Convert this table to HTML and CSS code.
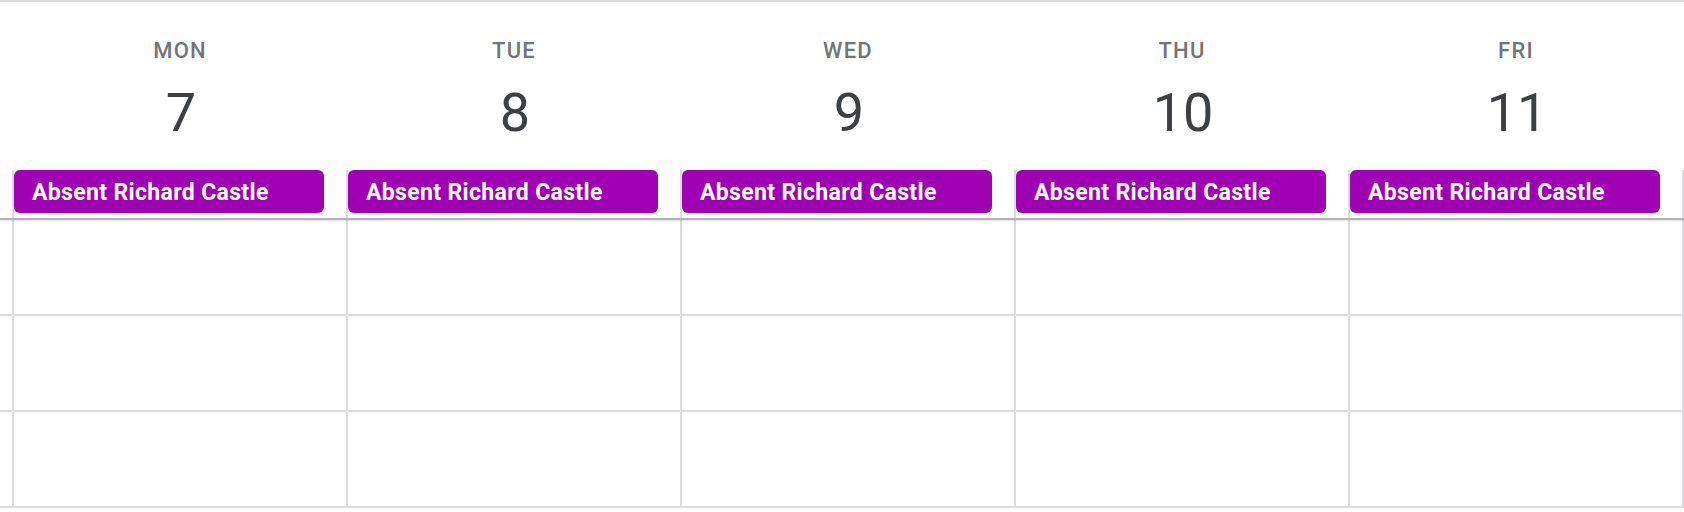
FILE: index.html
```html
<!DOCTYPE html>
<html lang="en">
<head>
<meta charset="utf-8">
<title>Week view</title>
<link rel="stylesheet" href="styles.css">
</head>
<body>
<div class="calendar">
  <div class="head">
    <div class="gutter"></div>
    <div class="day"><div class="dname">MON</div><div class="dnum">7</div></div>
    <div class="day"><div class="dname">TUE</div><div class="dnum">8</div></div>
    <div class="day"><div class="dname">WED</div><div class="dnum">9</div></div>
    <div class="day"><div class="dname">THU</div><div class="dnum">10</div></div>
    <div class="day"><div class="dname">FRI</div><div class="dnum">11</div></div>
  </div>
  <div class="allday">
    <div class="gutter"></div>
    <div class="cell"><div class="chip">Absent Richard Castle</div></div>
    <div class="cell"><div class="chip">Absent Richard Castle</div></div>
    <div class="cell"><div class="chip">Absent Richard Castle</div></div>
    <div class="cell"><div class="chip">Absent Richard Castle</div></div>
    <div class="cell last"><div class="chip">Absent Richard Castle</div></div>
  </div>
  <div class="grid">
    <div class="row">
      <div class="gutter"></div>
      <div class="cell"></div><div class="cell"></div><div class="cell"></div><div class="cell"></div><div class="cell last"></div>
    </div>
    <div class="row">
      <div class="gutter"></div>
      <div class="cell"></div><div class="cell"></div><div class="cell"></div><div class="cell"></div><div class="cell last"></div>
    </div>
    <div class="row">
      <div class="gutter"></div>
      <div class="cell"></div><div class="cell"></div><div class="cell"></div><div class="cell"></div><div class="cell last"></div>
    </div>
  </div>
</div>
</body>
</html>
```

FILE: styles.css
```css
html, body {
  margin: 0;
  padding: 0;
  background: #ffffff;
  overflow: hidden;
}

.calendar {
  width: 1684px;
  height: 512px;
  border-top: 2px solid #dcdce0;
  box-sizing: border-box;
  font-family: Roboto, "Liberation Sans", sans-serif;
}

.gutter {
  width: 12px;
  flex: none;
}

.head {
  display: flex;
  padding-top: 36px;
  height: 132px;
  box-sizing: border-box;
}

.day {
  width: 334px;
  flex: none;
  display: flex;
  flex-direction: column;
  align-items: center;
}

.dname {
  font-size: 22px;
  line-height: 26px;
  font-weight: 500;
  letter-spacing: 1.2px;
  color: #70757a;
  padding-left: 2px;
}

.dnum {
  margin-top: 17px;
  font-size: 54px;
  line-height: 64px;
  font-weight: 400;
  color: #3c4043;
  padding-left: 4px;
}

.allday {
  display: flex;
  margin-top: 36px;
  height: 48px;
  border-bottom: 2px solid #b2b2b6;
  box-shadow: 0 1px 2px rgba(0, 0, 0, 0.12);
  position: relative;
}

.cell {
  width: 332px;
  flex: none;
  border-left: 2px solid #dcdce0;
}

.cell.last {
  border-right: 2px solid #dcdce0;
}

.chip {
  width: 310px;
  height: 43px;
  box-sizing: border-box;
  padding: 3px 0 0 18px;
  background: #a000b4;
  border-radius: 6px;
  color: #ffffff;
  font-size: 23px;
  line-height: 40px;
  font-weight: 700;
  letter-spacing: 0.35px;
  white-space: nowrap;
}

.grid {
  display: flex;
  flex-direction: column;
}

.row {
  display: flex;
  height: 96px;
  box-sizing: border-box;
  border-bottom: 2px solid #dcdce0;
}
```
